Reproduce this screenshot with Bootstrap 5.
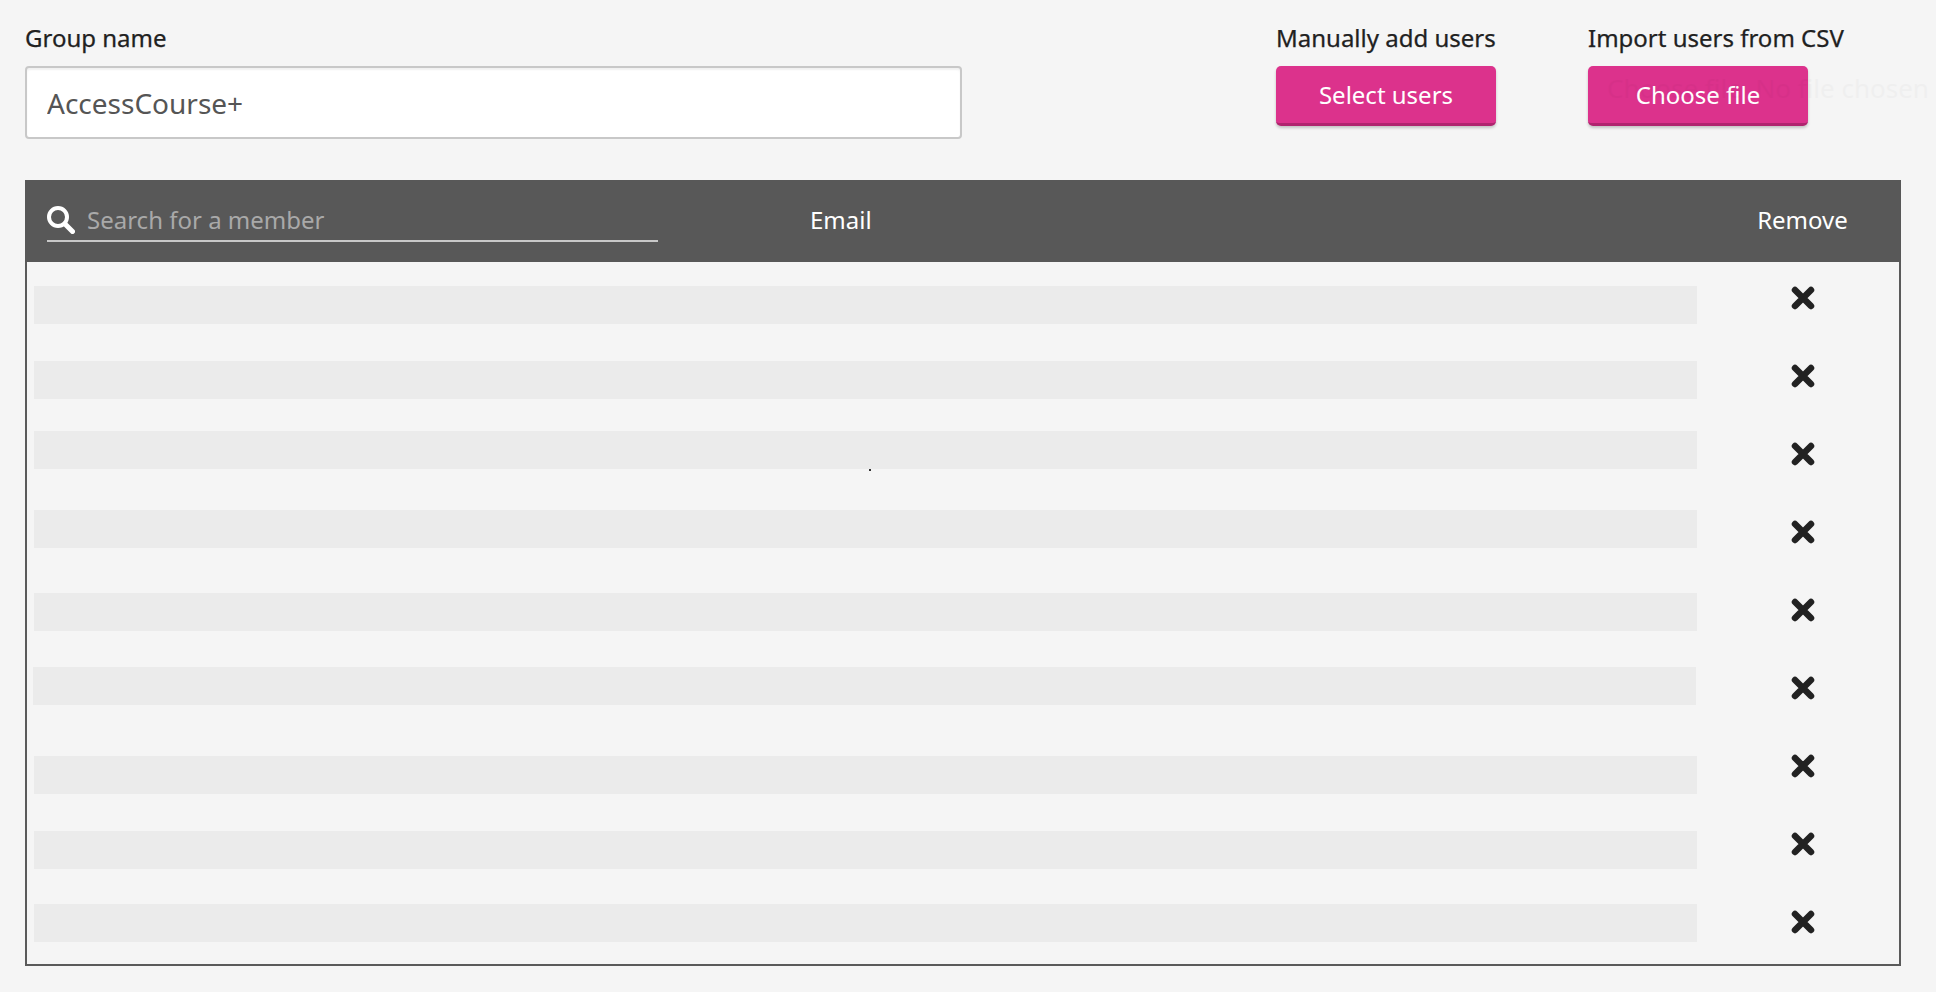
<!DOCTYPE html>
<html lang="en">
<head>
  <meta charset="UTF-8">
  <meta name="viewport" content="width=device-width, initial-scale=1">
  <title>Edit group</title>
  <link href="https://cdn.jsdelivr.net/npm/bootstrap@5.3.3/dist/css/bootstrap.min.css" rel="stylesheet">
  <style>
    body {
      background-color: #f5f5f5;
      font-family: "Noto Sans", "Open Sans", sans-serif;
      color: #212121;
    }
    .page-wrap {
      padding: 0 35px 0 25px;
    }
    .top-bar {
      height: 180px;
      padding-top: 22px;
    }
    .field-label {
      font-size: 24px;
      line-height: 32px;
      height: 44px;
      margin: 0;
      -webkit-text-stroke: 0.25px #212121;
    }
    .group-field {
      width: 937px;
    }
    .group-field .form-control {
      height: 73px;
      font-size: 28px;
      color: #555;
      padding: 0 20px;
      border: 2px solid #c8c8c8;
      border-radius: 4px;
      box-shadow: inset 0 2px 2px rgba(0, 0, 0, 0.06);
    }
    .select-col {
      margin-left: 314px;
      width: 312px;
    }
    .pink-btn {
      width: 220px;
      height: 60px;
      background-color: #dc328c;
      border: 0;
      border-bottom: 3px solid #b0246f;
      border-radius: 5px;
      color: #fff;
      font-size: 24px;
      box-shadow: 0 2px 3px rgba(0, 0, 0, 0.2);
    }
    .ghost-file {
      left: 19px;
      top: 3px;
      font-size: 26px;
      white-space: nowrap;
      color: #000;
      opacity: 0.018;
      pointer-events: none;
    }
    .members-box {
      border: 2px solid #5a5a5a;
      border-top: 0;
    }
    .members-head {
      height: 82px;
      margin: 0 -2px;
      background-color: #585858;
      color: #fff;
      font-size: 24px;
    }
    .search-wrap {
      width: 611px;
      margin-left: 22px;
      height: 42px;
      border-bottom: 2px solid #c8c8c8;
      margin-top: 20px;
      align-self: flex-start;
    }
    .search-wrap input {
      background: transparent;
      border: 0;
      outline: 0;
      color: #fff;
      font-size: 24px;
      padding: 0 0 0 12px;
      width: 100%;
      font-family: inherit;
    }
    .search-wrap input::placeholder {
      color: #a9a9a9;
      opacity: 1;
    }
    .email-head {
      margin-left: 152px;
      margin-top: -2px;
    }
    .remove-head {
      margin-left: auto;
      margin-top: -2px;
      width: 197px;
      text-align: center;
    }
    .member-row {
      height: 78px;
    }
    .name-bar {
      position: relative;
      height: 38px;
      width: 1663px;
      margin-left: 7px;
      background-color: #ebebeb;
    }
    .member-row:nth-child(1) .name-bar { margin-top: 24px; }
    .member-row:nth-child(2) .name-bar { margin-top: 21px; }
    .member-row:nth-child(3) .name-bar { margin-top: 13px; }
    .member-row:nth-child(4) .name-bar { margin-top: 14px; }
    .member-row:nth-child(5) .name-bar { margin-top: 19px; }
    .member-row:nth-child(6) .name-bar { margin-top: 15px; margin-left: 6px; }
    .member-row:nth-child(7) .name-bar { margin-top: 26px; }
    .member-row:nth-child(8) .name-bar { margin-top: 23px; }
    .member-row:nth-child(9) .name-bar { margin-top: 18px; }
    .remove-cell {
      margin-left: auto;
      width: 193px;
      height: 72px;
    }
    .stray-dot {
      left: 835px;
      bottom: -2px;
      width: 2px;
      height: 2px;
      background-color: #333;
    }
  </style>
</head>
<body>

<div class="page-wrap">
  <div class="top-bar d-flex">
    <div class="group-field">
      <label class="field-label d-block" for="group-name">Group name</label>
      <input id="group-name" class="form-control" type="text" value="AccessCourse+">
    </div>
    <div class="select-col">
      <div class="field-label">Manually add users</div>
      <button class="btn pink-btn p-0" type="button">Select users</button>
    </div>
    <div>
      <div class="field-label">Import users from CSV</div>
      <div class="position-relative">
        <button class="btn pink-btn p-0" type="button">Choose file</button>
        <span class="ghost-file position-absolute">Choose file&nbsp; No file chosen</span>
      </div>
    </div>
  </div>

  <div class="members-box">
    <div class="members-head d-flex align-items-center">
      <div class="search-wrap d-flex align-items-center flex-shrink-0">
        <svg width="28" height="28" viewBox="0 0 28 28" class="flex-shrink-0" aria-hidden="true">
          <circle cx="11" cy="11" r="9" fill="none" stroke="#fff" stroke-width="4"></circle>
          <path d="M18 18l7.5 7.5" stroke="#fff" stroke-width="5" stroke-linecap="round"></path>
        </svg>
        <input type="text" placeholder="Search for a member">
      </div>
      <div class="email-head">Email</div>
      <div class="remove-head">Remove</div>
    </div>
    <div id="member-list"></div>
  </div>
</div>

<script>
  // Members are still loading, so every row is a grey placeholder
  const list = document.getElementById('member-list');
  for (let i = 0; i < 9; i++) {
    const row = document.createElement('div');
    row.className = 'member-row d-flex';
    row.innerHTML = `
      <div class="name-bar flex-shrink-0">${i === 2 ? '<span class="stray-dot position-absolute"></span>' : ''}</div>
      <div class="remove-cell d-flex align-items-center justify-content-center">
        <svg width="24" height="24" viewBox="0 0 24 24" aria-hidden="true">
          <path d="M4 4l16 16M20 4L4 20" stroke="#222" stroke-width="6.5" stroke-linecap="round" fill="none"></path>
        </svg>
      </div>
    `;
    list.appendChild(row);
  }
</script>

<script src="https://cdn.jsdelivr.net/npm/bootstrap@5.3.3/dist/js/bootstrap.bundle.min.js"></script>
</body>
</html>
